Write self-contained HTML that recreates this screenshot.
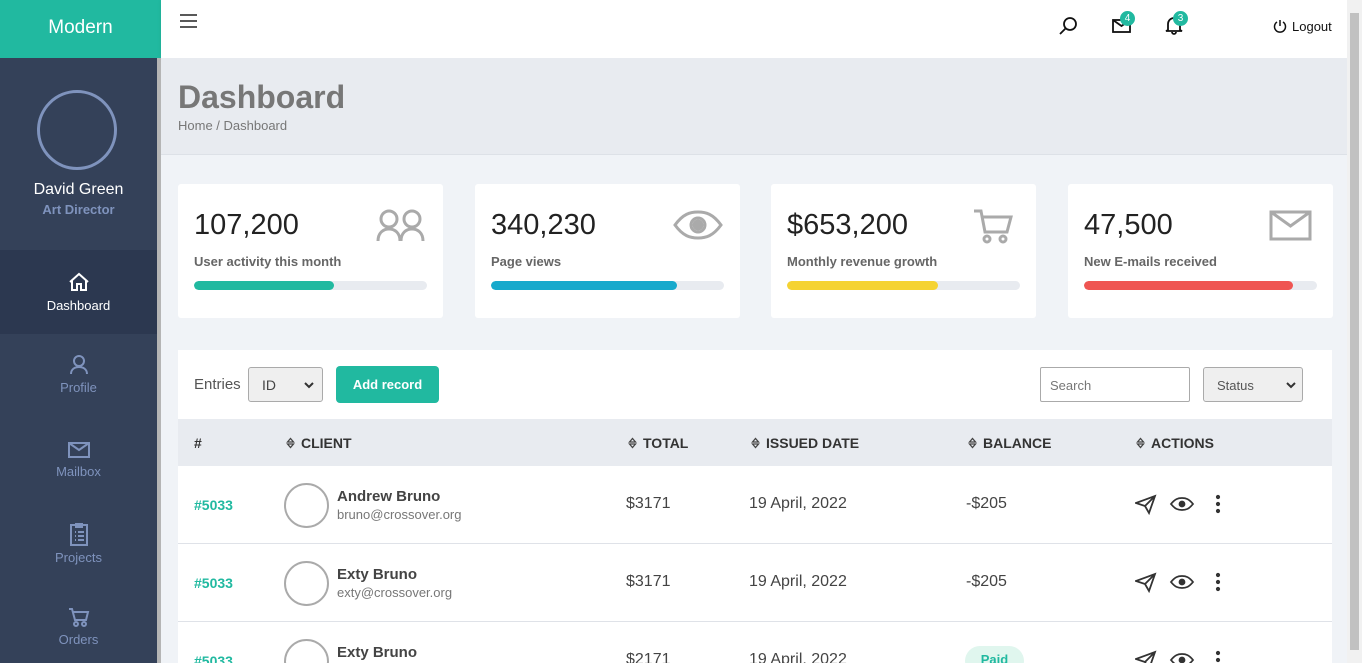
<!DOCTYPE html>
<html><head><meta charset="utf-8"><style>
*{box-sizing:border-box;margin:0;padding:0}
html,body{width:1362px;height:663px;overflow:hidden}
body{font-family:"Liberation Sans",sans-serif;background:#f0f3f7;position:relative;color:#333}
.abs{position:absolute}
#side{left:0;top:0;width:161px;height:663px;background:#344159}
#logo{left:0;top:0;width:161px;height:58px;background:#21b9a0;color:#fff;font-size:19px;text-align:center;line-height:56px}
#sbar{left:157px;top:58px;width:4px;height:605px;background:#b5b5b5}
.nav{left:0;width:157px;height:84px;text-align:center;color:#7f93bd;font-size:13px}
.nav svg{display:block;margin:20px auto 4px}
#top{left:161px;top:0;width:1186px;height:58px;background:#fff;box-shadow:0 1px 4px rgba(0,0,0,.08)}
#pbar{left:1347px;top:0;width:15px;height:663px;background:#f1f1f1}
#head{left:161px;top:58px;width:1186px;height:97px;background:#e8ebf0;border-bottom:1px solid #dde1e7}
.card{background:#fff;border-radius:3px;top:184px;width:265px;height:134px}
.card .n{position:absolute;left:16px;top:25px;font-size:29px;color:#222}
.card .l{position:absolute;left:16px;top:70px;font-size:13px;font-weight:bold;color:#666}
.card .b{position:absolute;left:16px;top:97px;width:233px;height:9px;border-radius:5px;background:#e8ebf0;overflow:hidden}
.card .b i{display:block;height:9px;border-radius:5px}
.card svg{position:absolute}
#tbl{left:178px;top:350px;width:1154px;height:313px;background:#fff}
.th{top:419px;height:47px;left:178px;width:1154px;background:#e8ebf0}
.hc{position:absolute;top:435px;font-size:14px;font-weight:bold;color:#333}
.hc svg{vertical-align:-1px;margin-right:6px}
.row{position:absolute;left:178px;width:1154px;height:78px;border-bottom:1px solid #dfe2e8}
.c{position:absolute;font-size:16px;color:#444}
.id{color:#21b9a0;font-weight:bold;font-size:14px}
.av{position:absolute;width:45px;height:45px;border-radius:50%;border:2px solid #aaa}
.nm{font-weight:bold;font-size:15px;color:#444}
.em{font-size:13px;color:#777}
.badge{position:absolute;background:#21b9a0;color:#fff;font-size:10px;width:15px;height:15px;border-radius:50%;text-align:center;line-height:15px}
</style></head><body>
<svg width="0" height="0" style="position:absolute"><defs>
<g id="srt" fill="none" stroke="#444" stroke-width="1.3"><path d="M1.5 5L4.5 1.5 7.5 5zM1.5 7L4.5 10.5 7.5 7z"/></g>
<g id="act" fill="none" stroke="#333" stroke-width="1.8"><path d="M1 9L20 2 14 19 10 12zM10 12L20 2"/><path d="M58 10c-4-5-7-6-11-6s-7 1-11 6c4 5 7 6 11 6s7-1 11-6z"/><circle cx="47" cy="10" r="2.5" fill="#333"/><circle cx="83" cy="3" r="1.2" fill="#333"/><circle cx="83" cy="10" r="1.2" fill="#333"/><circle cx="83" cy="17" r="1.2" fill="#333"/></g></defs></svg>
<div id="side" class="abs"></div>
<div id="logo" class="abs">Modern</div>
<div class="abs" style="left:37px;top:90px;width:80px;height:80px;border-radius:50%;border:3px solid #7f93bd"></div>
<div class="abs" style="left:0;width:157px;top:181px;text-align:center;color:#fff;font-size:16px">David Green</div>
<div class="abs" style="left:0;width:157px;top:202px;text-align:center;color:#7f93bd;font-size:13px;font-weight:bold">Art Director</div>
<div class="abs nav" style="top:250px;background:#2c3850;color:#fff"><svg width="24" height="24" viewBox="0 0 24 24" fill="none" stroke="#fff" stroke-width="2"><path d="M3 12L12 4l9 8M5 10v10h5v-6h4v6h5V10"/></svg>Dashboard</div>
<div class="abs nav" style="top:334px"><svg width="20" height="22" viewBox="0 0 20 22" fill="none" stroke="#7f93bd" stroke-width="2"><circle cx="10" cy="7" r="5"/><path d="M2 20c0-5 4-7 8-7s8 2 8 7"/></svg>Profile</div>
<div class="abs nav" style="top:418px"><svg width="24" height="22" viewBox="0 0 24 22" fill="none" stroke="#7f93bd" stroke-width="2"><rect x="2" y="5" width="20" height="14"/><path d="M2 5l10 7 10-7"/></svg>Mailbox</div>
<div class="abs nav" style="top:502px"><svg width="22" height="24" viewBox="0 0 22 24" fill="none" stroke="#7f93bd" stroke-width="2"><rect x="3" y="3" width="16" height="20"/><path d="M8 2h6v3H8zM7 10h1M10 10h6M7 14h1M10 14h6M7 18h1M10 18h6"/></svg>Projects</div>
<div class="abs nav" style="top:586px"><svg width="24" height="22" viewBox="0 0 24 22" fill="none" stroke="#7f93bd" stroke-width="2"><path d="M2 3h3l3 11h11l2-8H6"/><circle cx="9" cy="18" r="2"/><circle cx="17" cy="18" r="2"/></svg>Orders</div>
<div id="sbar" class="abs"></div>
<div id="top" class="abs"></div>
<svg class="abs" style="left:180px;top:14px" width="18" height="14" viewBox="0 0 18 14" stroke="#222" stroke-width="1.6"><path d="M0 1h17M0 7h17M0 13h17"/></svg>
<svg class="abs" style="left:1059px;top:16px" width="20" height="20" viewBox="0 0 20 20" fill="none" stroke="#111" stroke-width="1.8"><circle cx="11" cy="8" r="6"/><path d="M7 12l-6 6"/></svg>
<svg class="abs" style="left:1112px;top:18px" width="20" height="16" viewBox="0 0 20 16" fill="none" stroke="#111" stroke-width="1.8"><rect x="1" y="2" width="17" height="12"/><path d="M1 2l8.5 6L18 2"/></svg>
<div class="badge" style="left:1120px;top:11px">4</div>
<svg class="abs" style="left:1165px;top:15px" width="18" height="20" viewBox="0 0 18 20" fill="none" stroke="#111" stroke-width="1.8"><path d="M3 15V9a6 6 0 0112 0v6l2 1H1zM7 17a2 2 0 004 0"/></svg>
<div class="badge" style="left:1173px;top:11px">3</div>
<svg class="abs" style="left:1273px;top:19px" width="14" height="14" viewBox="0 0 14 14" fill="none" stroke="#111" stroke-width="1.5"><path d="M4 3a5.5 5.5 0 106 0M7 1v6"/></svg>
<div class="abs" style="left:1292px;top:19px;font-size:13px;color:#111">Logout</div>
<div id="head" class="abs"></div>
<div class="abs" style="left:178px;top:79px;font-size:32px;font-weight:bold;color:#777">Dashboard</div>
<div class="abs" style="left:178px;top:118px;font-size:13px;color:#777">Home / Dashboard</div>

<div class="abs card" style="left:178px"><div class="n">107,200</div><div class="l">User activity this month</div><div class="b"><i style="width:140px;background:#21b9a0"></i></div>
<svg style="left:198px;top:24px" width="50" height="34" viewBox="0 0 50 34" fill="none" stroke="#aaa" stroke-width="3"><circle cx="13" cy="11" r="8"/><circle cx="36" cy="11" r="8"/><path d="M2 33c0-8 5-12 11-12s11 4 11 12M25 33c0-8 5-12 11-12s11 4 11 12"/></svg></div>
<div class="abs card" style="left:475px"><div class="n">340,230</div><div class="l">Page views</div><div class="b"><i style="width:186px;background:#17a9cc"></i></div>
<svg style="left:198px;top:26px" width="50" height="30" viewBox="0 0 50 30" fill="none" stroke="#aaa" stroke-width="3"><path d="M2 15C10 4 17 2 25 2s15 2 23 13C40 26 33 28 25 28S10 26 2 15z"/><circle cx="25" cy="15" r="7"/><circle cx="25" cy="15" r="4" fill="#aaa"/></svg></div>
<div class="abs card" style="left:771px"><div class="n">$653,200</div><div class="l">Monthly revenue growth</div><div class="b"><i style="width:151px;background:#f5d332"></i></div>
<svg style="left:202px;top:24px" width="40" height="36" viewBox="0 0 40 36" fill="none" stroke="#aaa" stroke-width="3"><path d="M1 3h7l4 21h22l4-15H10"/><circle cx="14" cy="31" r="3"/><circle cx="30" cy="31" r="3"/></svg></div>
<div class="abs card" style="left:1068px"><div class="n">47,500</div><div class="l">New E-mails received</div><div class="b"><i style="width:209px;background:#ef5552"></i></div>
<svg style="left:201px;top:26px" width="43" height="31" viewBox="0 0 43 31" fill="none" stroke="#aaa" stroke-width="3"><rect x="2" y="2" width="39" height="27"/><path d="M2 2l19.5 14L41 2"/></svg></div>

<div id="tbl" class="abs"></div>
<div class="abs" style="left:194px;top:376px;font-size:15px;color:#555">Entries</div>
<div class="abs" style="left:248px;top:367px;width:75px;height:35px;border:1px solid #aaa;border-radius:3px;background:#efefef;font-size:14px;color:#444;padding:9px 0 0 13px">ID<svg style="position:absolute;right:8px;top:14px" width="10" height="7" viewBox="0 0 10 7" fill="none" stroke="#333" stroke-width="2"><path d="M1 1l4 4 4-4"/></svg></div>
<div class="abs" style="left:336px;top:366px;width:103px;height:37px;border-radius:4px;background:#21b9a0;color:#fff;font-weight:bold;font-size:13px;text-align:center;line-height:37px">Add record</div>
<div class="abs" style="left:1040px;top:367px;width:150px;height:35px;border:1px solid #aaa;border-radius:2px;font-size:13px;color:#777;padding:10px 0 0 9px">Search</div>
<div class="abs" style="left:1203px;top:367px;width:100px;height:35px;border:1px solid #aaa;border-radius:3px;background:#efefef;font-size:13px;color:#555;padding:10px 0 0 13px">Status<svg style="position:absolute;right:6px;top:14px" width="10" height="7" viewBox="0 0 10 7" fill="none" stroke="#333" stroke-width="2"><path d="M1 1l4 4 4-4"/></svg></div>

<div class="abs th"></div>
<div class="hc" style="left:194px">#</div>
<div class="hc" style="left:286px"><svg width="9" height="12"><use href="#srt"/></svg>CLIENT</div>
<div class="hc" style="left:628px"><svg width="9" height="12"><use href="#srt"/></svg>TOTAL</div>
<div class="hc" style="left:751px"><svg width="9" height="12"><use href="#srt"/></svg>ISSUED DATE</div>
<div class="hc" style="left:968px"><svg width="9" height="12"><use href="#srt"/></svg>BALANCE</div>
<div class="hc" style="left:1136px"><svg width="9" height="12"><use href="#srt"/></svg>ACTIONS</div>

<div class="row" style="top:466px"></div>
<div class="row" style="top:544px"></div>

<div class="c id" style="left:194px;top:497px">#5033</div>
<div class="av" style="left:284px;top:483px"></div>
<div class="c nm" style="left:337px;top:488px">Andrew Bruno</div>
<div class="c em" style="left:337px;top:507px">bruno@crossover.org</div>
<div class="c" style="left:626px;top:495px">$3171</div>
<div class="c" style="left:749px;top:495px">19 April, 2022</div>
<div class="c" style="left:966px;top:495px">-$205</div>

<div class="c id" style="left:194px;top:575px">#5033</div>
<div class="av" style="left:284px;top:561px"></div>
<div class="c nm" style="left:337px;top:566px">Exty Bruno</div>
<div class="c em" style="left:337px;top:585px">exty@crossover.org</div>
<div class="c" style="left:626px;top:573px">$3171</div>
<div class="c" style="left:749px;top:573px">19 April, 2022</div>
<div class="c" style="left:966px;top:573px">-$205</div>

<div class="c id" style="left:194px;top:653px">#5033</div>
<div class="av" style="left:284px;top:639px"></div>
<div class="c nm" style="left:337px;top:644px">Exty Bruno</div>
<div class="c" style="left:626px;top:651px">$2171</div>
<div class="c" style="left:749px;top:651px">19 April, 2022</div>
<div class="abs" style="left:965px;top:646px;width:59px;height:30px;border-radius:15px;background:#e0f6ee;color:#21b9a0;font-weight:bold;font-size:13px;text-align:center;line-height:28px">Paid</div>

<svg class="abs" style="left:1135px;top:494px" width="90" height="21"><use href="#act"/></svg>
<svg class="abs" style="left:1135px;top:572px" width="90" height="21"><use href="#act"/></svg>
<svg class="abs" style="left:1135px;top:650px" width="90" height="21"><use href="#act"/></svg>

<div id="pbar" class="abs"></div>
<div class="abs" style="left:1350px;top:13px;width:9px;height:637px;background:#c1c1c1"></div>
</body></html>
